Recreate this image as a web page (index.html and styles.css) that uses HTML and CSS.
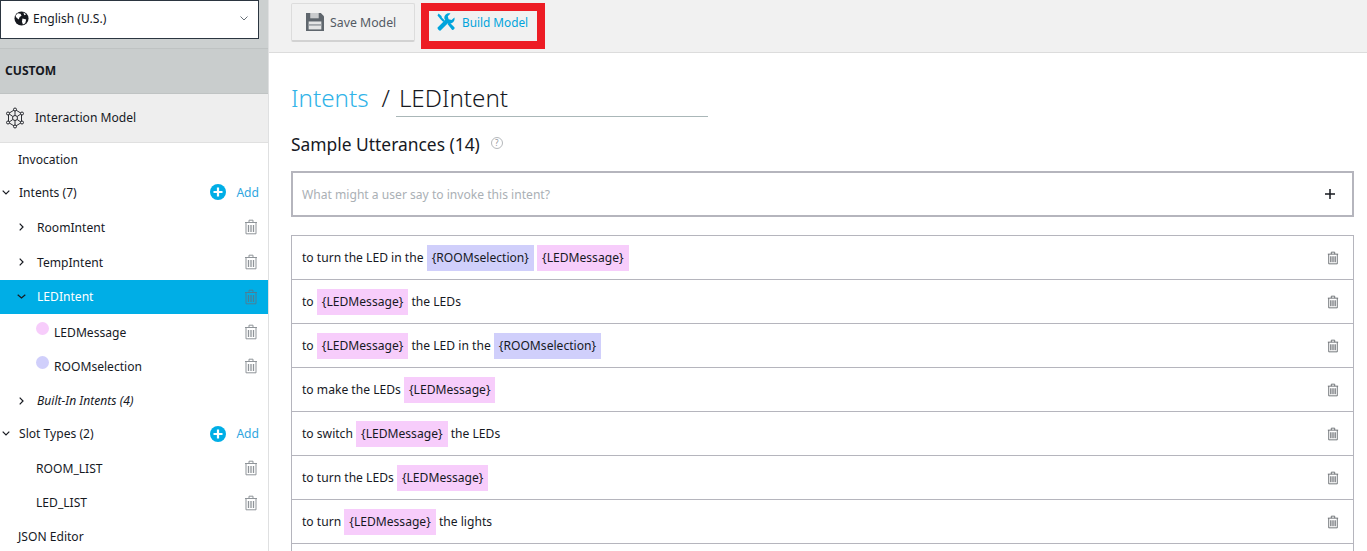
FILE: index.html
```html
<!DOCTYPE html>
<html lang="en">
<head>
    <meta charset="UTF-8">
    <title>Interaction Model</title>
    <link rel="stylesheet" href="styles.css">
</head>
<body>
    <svg class="defs" width="0" height="0">
        <symbol id="trash" viewBox="0 0 14 16">
            <path d="M1 3.500h12M5 3.500V1.200h4v2.300M2 3.500v11.300h10V3.500" fill="none" stroke="currentColor" stroke-width="1"/>
            <path d="M4.500 6v7M7 6v7M9.500 6v7" fill="none" stroke="currentColor" stroke-width="1.300"/>
        </symbol>
        <symbol id="plus-circle" viewBox="0 0 16 16">
            <circle cx="8" cy="8" r="8" fill="#00aee6"/>
            <path d="M8 3.500v9M3.500 8h9" stroke="#fff" stroke-width="2.200"/>
        </symbol>
    </svg>
    <div class="app">
        <aside class="sidebar">
            <div class="lang-wrap">
                <div class="lang">
                    <svg class="globe" width="15" height="15" viewBox="0 0 16 16">
                        <circle cx="8" cy="8" r="7.500" fill="#16191f"/>
                        <path d="M4 2.500l3 .5 1 2-2 1.500-1 2.500-2.500-2-1-2zM9 8l4 1-1 4-2.500 1.500-1-3zM10 1.500l3 2-2 1z" fill="#fff"/>
                    </svg>
                    <span class="lang-name">English (U.S.)</span>
                    <svg class="lang-caret" width="8" height="5" viewBox="0 0 8 5"><path d="M.5.500L4 4 7.500.5" fill="none" stroke="#687078" stroke-width="1"/></svg>
                </div>
            </div>
            <div class="custom">CUSTOM</div>
            <div class="model">
                <svg width="20" height="22" viewBox="0 0 20 22" fill="none" stroke="#16191f" stroke-width=".9">
                    <path d="M10 2.500l6.500 4v9l-6.500 4-6.500-4v-9z"/>
                    <circle cx="10" cy="11" r="2.500"/>
                    <path d="M10 2.500v6M10 13.500v6M3.500 6.500l4.300 3M16.500 6.500l-4.300 3M3.500 15.500l4.300-3M16.500 15.500l-4.300-3"/>
                    <circle cx="10" cy="2.500" r="1.500" fill="#eee"/><circle cx="10" cy="19.500" r="1.500" fill="#eee"/>
                    <circle cx="3" cy="6.500" r="1.500" fill="#eee"/><circle cx="17" cy="6.500" r="1.500" fill="#eee"/>
                    <circle cx="3" cy="15.500" r="1.500" fill="#eee"/><circle cx="17" cy="15.500" r="1.500" fill="#eee"/>
                </svg>
                <span class="model-name">Interaction Model</span>
            </div>
            <ul class="tree">
                <li class="row top plain">Invocation</li>
                <li class="row top lifted">
                    <svg class="caret-down" width="8" height="5" viewBox="0 0 8 5"><path d="M.7.700L4 4 7.300.7" fill="none" stroke="#16191f" stroke-width="1.200"/></svg>
                    <span class="label">Intents (7)</span>
                    <svg class="add-icon" width="16" height="16"><use href="#plus-circle"/></svg>
                    <span class="add">Add</span>
                </li>
                <li class="row child">
                    <svg class="caret-right" width="5" height="8" viewBox="0 0 5 8"><path d="M.7.700L4 4 .7 7.300" fill="none" stroke="#16191f" stroke-width="1.200"/></svg>
                    <span class="label">RoomIntent</span>
                    <svg class="trash" width="14" height="16"><use href="#trash"/></svg>
                </li>
                <li class="row child tall">
                    <svg class="caret-right" width="5" height="8" viewBox="0 0 5 8"><path d="M.7.700L4 4 .7 7.300" fill="none" stroke="#16191f" stroke-width="1.200"/></svg>
                    <span class="label">TempIntent</span>
                    <svg class="trash" width="14" height="16"><use href="#trash"/></svg>
                </li>
                <li class="row child active">
                    <svg class="caret-open" width="9" height="5" viewBox="0 0 9 5"><path d="M.7.700L4.500 4 8.300.7" fill="none" stroke="#16191f" stroke-width="1.200"/></svg>
                    <span class="label">LEDIntent</span>
                    <svg class="trash" width="14" height="16"><use href="#trash"/></svg>
                </li>
                <li class="row slot">
                    <i class="dot pink"></i>
                    <span class="label">LEDMessage</span>
                    <svg class="trash" width="14" height="16"><use href="#trash"/></svg>
                </li>
                <li class="row slot">
                    <i class="dot violet"></i>
                    <span class="label">ROOMselection</span>
                    <svg class="trash" width="14" height="16"><use href="#trash"/></svg>
                </li>
                <li class="row child builtin-row">
                    <svg class="caret-right" width="5" height="8" viewBox="0 0 5 8"><path d="M.7.700L4 4 .7 7.300" fill="none" stroke="#16191f" stroke-width="1.200"/></svg>
                    <span class="label builtin">Built-In Intents (4)</span>
                </li>
                <li class="row top">
                    <svg class="caret-down" width="8" height="5" viewBox="0 0 8 5"><path d="M.7.700L4 4 7.300.7" fill="none" stroke="#16191f" stroke-width="1.200"/></svg>
                    <span class="label">Slot Types (2)</span>
                    <svg class="add-icon" width="16" height="16"><use href="#plus-circle"/></svg>
                    <span class="add">Add</span>
                </li>
                <li class="row type">
                    <span class="label">ROOM_LIST</span>
                    <svg class="trash" width="14" height="16"><use href="#trash"/></svg>
                </li>
                <li class="row type">
                    <span class="label">LED_LIST</span>
                    <svg class="trash" width="14" height="16"><use href="#trash"/></svg>
                </li>
                <li class="row top plain">JSON Editor</li>
            </ul>
        </aside>
        <main class="main">
            <div class="toolbar">
                <button class="btn save">
                    <svg width="18" height="18" viewBox="0 0 17 17">
                        <path d="M0 0h14l3 3v14H0z" fill="#5f666d"/>
                        <rect x="4" y="0" width="8" height="5" fill="#c9cbcd"/>
                        <rect x="2.500" y="8" width="12" height="7.500" fill="#e3e4e5"/>
                        <rect x="2.500" y="10.500" width="12" height="1.500" fill="#9a9fa4"/>
                    </svg>
                    <span>Save Model</span>
                </button>
                <div class="btn build">
                    <svg width="18" height="18" viewBox="0 0 18 18" fill="#00a4dc">
                        <path d="M.6 14.500l8-8 3 3-8 8c-1 .8-3.800-2-3-3z"/>
                        <path d="M7.500 6C6.500 2.500 10 -.5 13.500.6L10.800 3.300l.8 3 3 .8L17.400 4.500c1 3.500-2.500 7-6 6z"/>
                        <path d="M1.500.5L4.500 3l.3 1.500 3 3-1.500 1.500-3-3L3 5.500.5 2.500zM10.500 11l1.800-1.800 5.100 5.100c.8 1.200-1.200 3.300-2.400 2.400z"/>
                    </svg>
                    <span>Build Model</span>
                </div>
            </div>
            <div class="content">
                <div class="crumbs">
                    <a class="crumb-link">Intents</a>
                    <span class="slash">/</span>
                    <span class="crumb-name">LEDIntent</span>
                </div>
                <div class="section-head">
                    <h2>Sample Utterances (14)</h2>
                    <span class="help">?</span>
                </div>
                <div class="say">
                    <span>What might a user say to invoke this intent?</span>
                    <svg width="10" height="10" viewBox="0 0 10 10"><path d="M5 0v10M0 5h10" stroke="#16191f" stroke-width="1.500"/></svg>
                </div>
                <ul class="utterances">
                    <li><p>to turn the LED in the <b class="v">{ROOMselection}</b> <b class="p">{LEDMessage}</b></p><svg class="trash" width="12" height="14"><use href="#trash"/></svg></li>
                    <li><p>to <b class="p">{LEDMessage}</b> the LEDs</p><svg class="trash" width="12" height="14"><use href="#trash"/></svg></li>
                    <li><p>to <b class="p">{LEDMessage}</b> the LED in the <b class="v">{ROOMselection}</b></p><svg class="trash" width="12" height="14"><use href="#trash"/></svg></li>
                    <li><p>to make the LEDs <b class="p">{LEDMessage}</b></p><svg class="trash" width="12" height="14"><use href="#trash"/></svg></li>
                    <li><p>to switch <b class="p">{LEDMessage}</b> the LEDs</p><svg class="trash" width="12" height="14"><use href="#trash"/></svg></li>
                    <li><p>to turn the LEDs <b class="p">{LEDMessage}</b></p><svg class="trash" width="12" height="14"><use href="#trash"/></svg></li>
                    <li><p>to turn <b class="p">{LEDMessage}</b> the lights</p><svg class="trash" width="12" height="14"><use href="#trash"/></svg></li>
                    <li></li>
                </ul>
            </div>
        </main>
    </div>
</body>
</html>
```

FILE: styles.css
```css
* {
    box-sizing: border-box;
}
html, body {
    margin: 0;
    height: 100%;
    overflow: hidden;
}
body {
    font-family: "Noto Sans", "Open Sans", sans-serif;
    font-size: 12.1px;
    color: #16191f;
    background: #fff;
}
ul {
    list-style: none;
    margin: 0;
    padding: 0;
}
.defs {
    position: absolute;
}
.app {
    display: flex;
    height: 551px;
}

/* sidebar */
.sidebar {
    width: 269px;
    flex-shrink: 0;
    border-right: 1px solid #dfe0e1;
}
.lang-wrap {
    height: 49px;
    background: #ccd0d0;
    border-bottom: 1px solid #bfc3c3;
}
.lang {
    display: flex;
    align-items: center;
    width: 259px;
    height: 39px;
    padding: 0 10px 2px 13px;
    background: #fff;
    border: 1px solid #2b3540;
}
.lang-name {
    margin-left: 4px;
    flex: 1;
}
.custom {
    height: 45px;
    line-height: 44px;
    padding-left: 5px;
    font-weight: 700;
    background: #c9cdcd;
    border-bottom: 1px solid #bfc3c3;
}
.model {
    display: flex;
    align-items: center;
    gap: 10px;
    height: 49px;
    padding-left: 5px;
    background: #eee;
    border-bottom: 1px solid #e0e0e0;
}
.model-name {
    margin-bottom: 2px;
}
.row {
    display: flex;
    align-items: center;
    height: 34.3px;
    padding-right: 10px;
}
.row .label {
    flex: 1;
}
.top {
    padding-left: 2px;
    padding-right: 9px;
}
.lifted {
    padding-bottom: 2px;
}
.plain {
    padding-left: 18px;
}
.tree .plain:first-child {
    height: 33px;
}
.caret-down {
    margin-right: 9px;
}
.child {
    padding-left: 19px;
}
.tall {
    height: 35px;
}
.caret-right {
    margin-right: 13px;
}
.caret-open {
    margin-right: 11px;
    margin-left: -2px;
}
.slot {
    padding-top: 2px;
    padding-left: 36px;
}
.builtin-row {
    padding-top: 2px;
}
.type {
    padding-left: 36px;
}
.dot {
    width: 13px;
    height: 13px;
    margin: -8px 5px 0 0;
    border-radius: 50%;
}
.pink {
    background: #f7cdfb;
}
.violet {
    background: #d0cffb;
}
.active {
    background: #00aee6;
    color: #fff;
}
.active .trash {
    color: #4b7f96;
}
.trash {
    color: #8f9499;
    flex-shrink: 0;
}
.add-icon {
    margin-right: 10px;
}
.add {
    color: #2fa6e0;
}
.builtin {
    font-style: italic;
}

/* main */
.main {
    flex: 1;
    min-width: 0;
}
.toolbar {
    display: flex;
    align-items: flex-start;
    gap: 6px;
    height: 53px;
    padding: 3px 0 0 22px;
    background: #f1f1f1;
    border-bottom: 1px solid #dcdcdc;
}
.btn {
    display: flex;
    align-items: center;
    font: inherit;
    background: #f1f1f1;
    height: 39px;
}
.save {
    width: 124px;
    gap: 6px;
    padding: 0 0 0 14px;
    font-size: 12.3px;
    color: #545b64;
    border: 1px solid #dcdcdc;
    border-bottom: 2px solid #d2d2d2;
    border-radius: 2px;
}
.build {
    flex-shrink: 0;
    width: 124px;
    height: 46px;
    gap: 7px;
    padding: 0 0 8px 8px;
    font-size: 11.8px;
    color: #00a4dc;
    border: 8px solid #ed1c24;
}
.content {
    padding: 27px 13px 0 22px;
}
.crumbs {
    display: flex;
    align-items: baseline;
    height: 36px;
    font-size: 24.2px;
    font-weight: 300;
    line-height: 36px;
}
.crumb-link {
    color: #30b3e8;
}
.slash {
    margin-left: 13px;
}
.crumb-name {
    width: 312px;
    margin-left: 6px;
    padding-left: 3px;
    border-bottom: 1px solid #aab7b8;
}
.section-head {
    display: flex;
    align-items: center;
    gap: 11px;
    margin-top: 16px;
}
h2 {
    margin: 0;
    font-size: 17.400px;
    font-weight: 400;
    line-height: 24px;
}
.help {
    width: 12px;
    height: 12px;
    margin-top: -3px;
    font-size: 8px;
    line-height: 10px;
    text-align: center;
    color: #8f9499;
    border: 1px solid #b5b8bb;
    border-radius: 50%;
}
.say {
    display: flex;
    align-items: center;
    justify-content: space-between;
    height: 46px;
    margin-top: 15px;
    padding: 0 17px 0 9px;
    color: #aab0b5;
    border: 2px solid #b5b5bd;
}
.utterances {
    margin-top: 18px;
    border: 1px solid #b5b5bd;
    border-bottom: 0;
}
.utterances li {
    display: flex;
    align-items: center;
    justify-content: space-between;
    height: 44px;
    padding: 0 14px 0 10px;
    border-bottom: 1px solid #b5b5bd;
}
.utterances p {
    margin: 0;
}
.utterances b {
    display: inline-block;
    height: 26px;
    line-height: 26px;
    padding: 0 5px;
    font-weight: 400;
}
.utterances .trash {
    color: #5f6368;
}
.v {
    background: #d0cffb;
}
.p {
    background: #f7cdfb;
}
```
